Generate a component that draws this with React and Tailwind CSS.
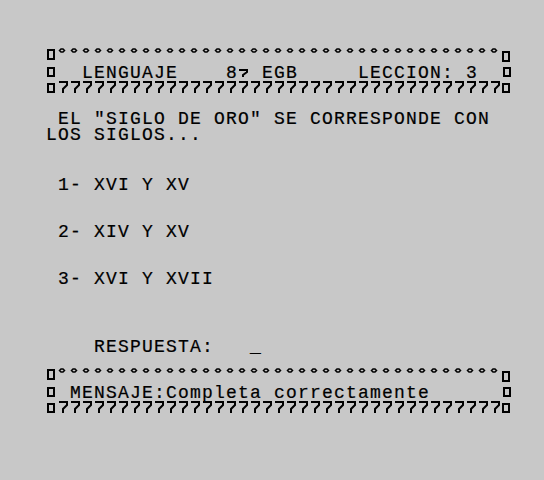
const mono =
  "font-['Liberation_Mono',monospace] text-[18px] tracking-[1.2px] leading-[16px] whitespace-pre text-black [-webkit-text-stroke:0.2px_black]"

const cols = Array.from({ length: 37 }, (_, i) => i + 1)

function TopBorder({ className }) {
  return (
    <svg width="468" height="16" viewBox="0 0 468 16" className={className}>
      <rect x="2" y="2" width="6" height="9" fill="none" stroke="#000" strokeWidth="2" />
      {cols.map((i) => (
        <polygon
          key={i}
          points={`${12 * i + 1.5},2.5 ${12 * i + 3},1 ${12 * i + 5},1 ${12 * i + 6.5},2.5 ${12 * i + 5},4 ${12 * i + 3},4`}
          fill="none"
          stroke="#000"
          strokeWidth="1.5"
        />
      ))}
      <rect x="457" y="4" width="6" height="9" fill="none" stroke="#000" strokeWidth="2" />
    </svg>
  )
}

function BottomBorder({ className }) {
  return (
    <svg width="468" height="17" viewBox="0 0 468 17" className={className}>
      <rect x="2" y="3" width="6" height="8" fill="none" stroke="#000" strokeWidth="2" />
      {cols.map((i) => (
        <path
          key={i}
          d={`M${12 * i + 1} 1 H${12 * i + 9} V4 L${12 * i + 5} 8 V12`}
          fill="none"
          stroke="#000"
          strokeWidth="2"
        />
      ))}
      <rect x="457" y="3" width="6" height="8" fill="none" stroke="#000" strokeWidth="2" />
    </svg>
  )
}

function Box() {
  return (
    <span className="flex h-[17px] w-[12px] shrink-0 items-start pl-[1px] pt-[3px]">
      <span className="h-[10px] w-[8px] border-2 border-black" />
    </span>
  )
}

function Ordinal() {
  return (
    <svg width="12" height="17" viewBox="0 0 12 17" className="shrink-0">
      <path d="M1 6 H9 V8 L5 11 V13" fill="none" stroke="#000" strokeWidth="2" />
    </svg>
  )
}

export default function App() {
  return (
    <div className="h-[480px] w-[544px] overflow-hidden bg-[#c8c8c8] pl-[46px] pt-[48px]">
      <TopBorder className="block" />

      <div className={`flex h-[17px] items-center ${mono}`}>
        <Box />
        <span>{"  LENGUAJE    8"}</span>
        <Ordinal />
        <span>{" EGB     LECCION: 3  "}</span>
        <Box />
      </div>

      <BottomBorder className="block" />

      <div className={`mt-[13px] h-[16px] ${mono}`}>{` EL "SIGLO DE ORO" SE CORRESPONDE CON`}</div>
      <div className={`h-[16px] ${mono}`}>{"LOS SIGLOS..."}</div>

      <div className={`mt-[34px] h-[16px] ${mono}`}>{" 1- XVI Y XV"}</div>
      <div className={`mt-[31px] h-[16px] ${mono}`}>{" 2- XIV Y XV"}</div>
      <div className={`mt-[31px] h-[16px] ${mono}`}>{" 3- XVI Y XVII"}</div>

      <div className={`mt-[52px] h-[16px] ${mono}`}>{"    RESPUESTA:   _"}</div>

      <TopBorder className="mt-[13px] block" />

      <div className={`flex h-[17px] items-center ${mono}`}>
        <Box />
        <span>{" MENSAJE:Completa correctamente      "}</span>
        <Box />
      </div>

      <BottomBorder className="block" />
    </div>
  )
}
